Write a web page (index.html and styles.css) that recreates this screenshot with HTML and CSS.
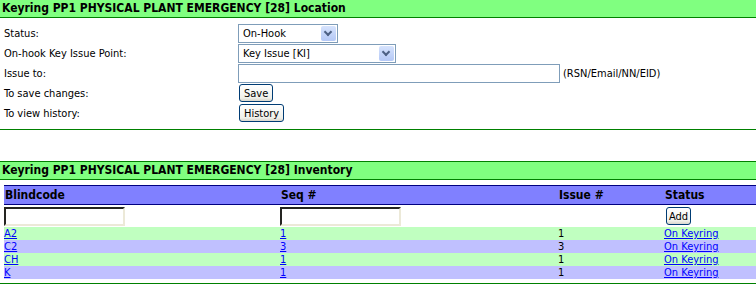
FILE: index.html
```html
<!DOCTYPE html>
<html lang="en">
<head>
  <meta charset="UTF-8">
  <title>Keyring PP1 Location</title>
  <link rel="stylesheet" href="styles.css">
</head>
<body>
  <div class="section">
    <div class="section-title">Keyring PP1 PHYSICAL PLANT EMERGENCY [28] Location</div>
    <div class="form">
      <label>Status:</label>
      <div class="field">
        <div class="select select-status"><span>On-Hook</span><i class="drop"></i></div>
      </div>
      <label>On-hook Key Issue Point:</label>
      <div class="field">
        <div class="select select-point"><span>Key Issue [KI]</span><i class="drop"></i></div>
      </div>
      <label>Issue to:</label>
      <div class="field">
        <input class="text-xp" type="text">
        <span class="hint">(RSN/Email/NN/EID)</span>
      </div>
      <label>To save changes:</label>
      <div class="field"><button class="btn">Save</button></div>
      <label>To view history:</label>
      <div class="field"><button class="btn">History</button></div>
    </div>
  </div>

  <div class="section section-inv">
    <div class="section-title">Keyring PP1 PHYSICAL PLANT EMERGENCY [28] Inventory</div>
    <table class="inventory">
      <thead>
        <tr>
          <th class="c-code">Blindcode</th>
          <th class="c-seq">Seq #</th>
          <th class="c-issue">Issue #</th>
          <th class="c-status">Status</th>
        </tr>
      </thead>
      <tbody>
        <tr class="add-row">
          <td><input class="text-old" type="text"></td>
          <td><input class="text-old" type="text"></td>
          <td></td>
          <td><button class="btn btn-add">Add</button></td>
        </tr>
        <tr class="row-a">
          <td><a href="#">A2</a></td>
          <td><a href="#">1</a></td>
          <td>1</td>
          <td><a href="#">On Keyring</a></td>
        </tr>
        <tr class="row-b">
          <td><a href="#">C2</a></td>
          <td><a href="#">3</a></td>
          <td>3</td>
          <td><a href="#">On Keyring</a></td>
        </tr>
        <tr class="row-a">
          <td><a href="#">CH</a></td>
          <td><a href="#">1</a></td>
          <td>1</td>
          <td><a href="#">On Keyring</a></td>
        </tr>
        <tr class="row-b">
          <td><a href="#">K</a></td>
          <td><a href="#">1</a></td>
          <td>1</td>
          <td><a href="#">On Keyring</a></td>
        </tr>
      </tbody>
    </table>
  </div>
</body>
</html>
```

FILE: styles.css
```css
body {
  margin: 0;
  font-family: 'DejaVu Sans Condensed', 'DejaVu Sans', sans-serif;
  font-size: 11px;
  color: #000;
  background: #fff;
}
.section {
  border-bottom: 1px solid #008000;
}
.section-title {
  background: #80ff80;
  border-top: 1px solid #008000;
  border-bottom: 1px solid #008000;
  height: 17px;
  line-height: 17px;
  padding-left: 2px;
  font-weight: bold;
  font-size: 12px;
  margin-top: -1px;
}
.form {
  display: grid;
  grid-template-columns: 234px 1fr;
  grid-auto-rows: 20px;
  padding: 5px 0 6px 4px;
  align-items: center;
}
.field {
  display: flex;
  align-items: center;
}
.select {
  box-sizing: border-box;
  height: 19px;
  border: 1px solid #7f9db9;
  display: flex;
  align-items: center;
  justify-content: space-between;
  padding: 0 1px 0 4px;
  background: #fff;
}
.select-status {
  width: 100px;
}
.select-point {
  width: 158px;
}
.drop {
  width: 15px;
  height: 15px;
  border-radius: 2px;
  background: linear-gradient(#d6e3fd, #b4c8f6);
  position: relative;
}
.drop::after {
  content: '';
  position: absolute;
  left: 4px;
  top: 3px;
  width: 4px;
  height: 4px;
  border-right: 2px solid #4d6185;
  border-bottom: 2px solid #4d6185;
  transform: rotate(45deg);
}
.text-xp {
  box-sizing: border-box;
  width: 322px;
  height: 19px;
  border: 1px solid #7f9db9;
  margin: 0;
  padding: 0;
}
.hint {
  margin-left: 3px;
  font-size: 11px;
}
.btn {
  font-family: inherit;
  font-size: 11px;
  height: 18px;
  padding: 0 4px;
  margin: 0 0 0 1px;
  border: 1px solid #003c74;
  border-radius: 3px;
  background: linear-gradient(#ffffff, #f0f0ea 80%, #d8d6cc);
  color: #000;
}
.section-inv {
  margin-top: 32px;
}
.inventory {
  border-collapse: collapse;
  width: calc(100% - 4px);
  margin: 5px 0 4px 4px;
}
.inventory th {
  background: #8080ff;
  border-top: 1px solid #000080;
  border-bottom: 1px solid #000080;
  height: 18px;
  padding: 0 0 0 1px;
  text-align: left;
  font-size: 12px;
}
.inventory td {
  padding: 0;
  height: 13px;
  line-height: 13px;
}
.c-code { width: 275px; }
.c-seq { width: 277px; }
.c-issue { width: 105px; }
.add-row td {
  height: 22px;
  background: #fff;
}
.text-old {
  box-sizing: border-box;
  width: 121px;
  height: 19px;
  margin: 1px 0 0;
  padding: 0;
  border: 2px inset #ece9d8;
  border-top-color: #7a786e;
  border-left-color: #7a786e;
}
.btn-add {
  margin-left: 2px;
  padding: 0 2px;
}
.row-a td { background: #c0ffc0; }
.row-b td { background: #c0c0ff; }
.inventory a {
  color: #0000ff;
}
```
